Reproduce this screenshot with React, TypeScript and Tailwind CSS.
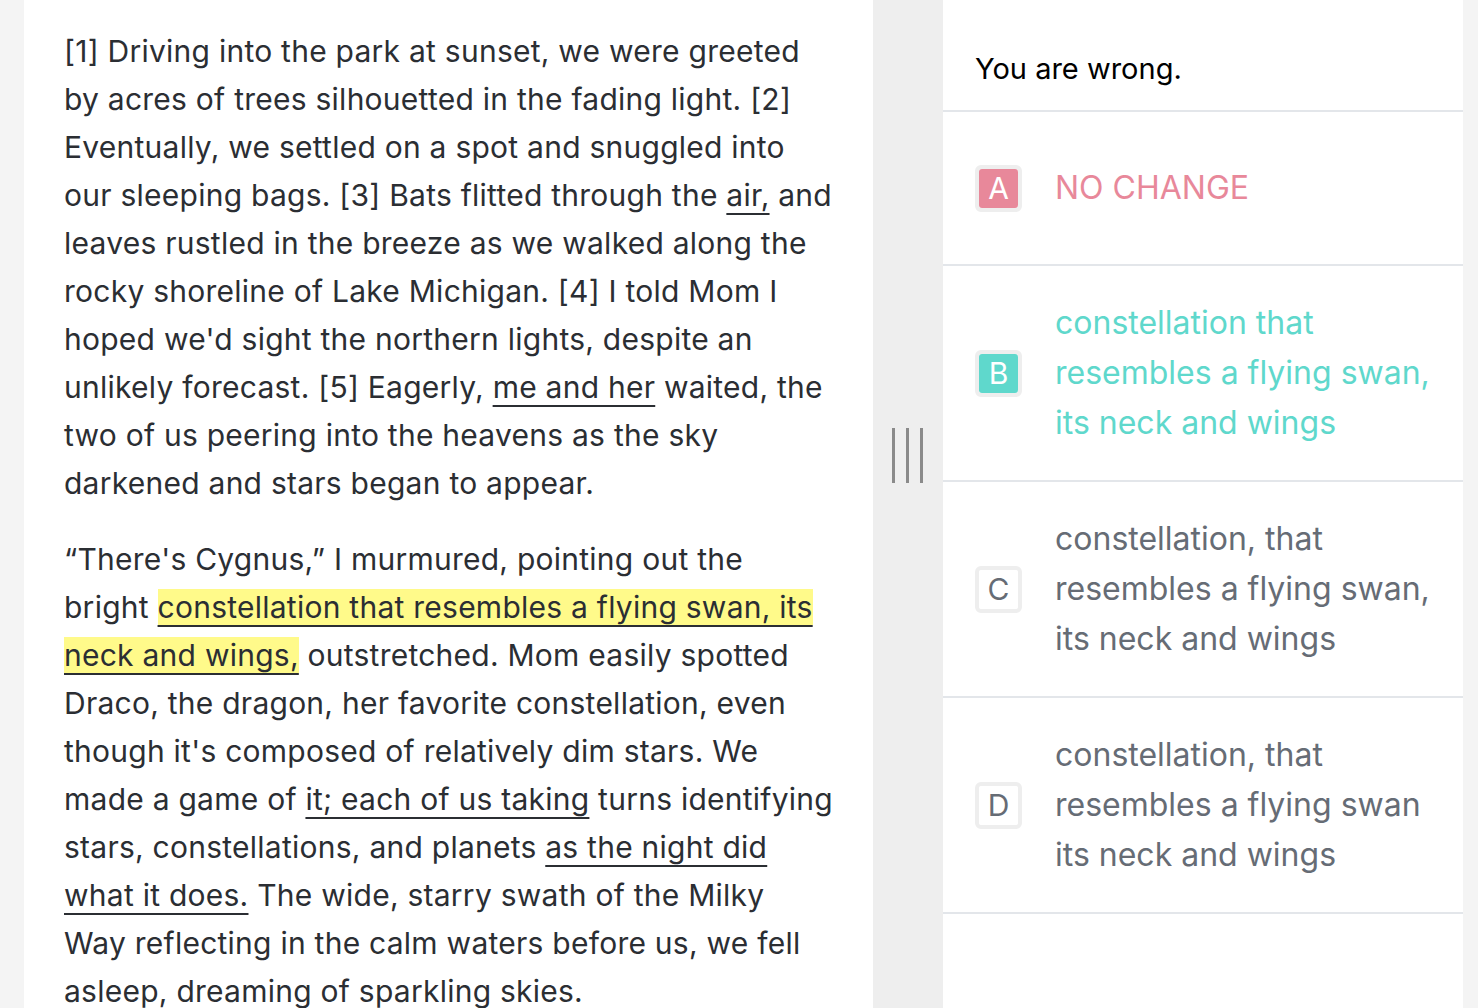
import React from "react";

const U = ({ children }: { children: React.ReactNode }) => (
  <span className="underline decoration-2 underline-offset-[7px] decoration-[#2b2e33]">{children}</span>
);

const options = [
  { letter: "A", text: "NO CHANGE", tone: "pink" },
  { letter: "B", text: "constellation that resembles a flying swan, its neck and wings", tone: "teal" },
  { letter: "C", text: "constellation, that resembles a flying swan, its neck and wings", tone: "gray" },
  { letter: "D", text: "constellation, that resembles a flying swan its neck and wings", tone: "gray" },
];

const App = () => {
  return (
    <div className="flex h-[1008px] overflow-hidden bg-[#f4f4f4] font-['Inter',sans-serif]">
      <div className="ml-6 w-[849px] shrink-0 bg-white px-10 pt-[27px] text-[30px] leading-[48px] tracking-[0.25px] text-[#2b2e33]">
        <p className="mb-7">
          [1] Driving into the park at sunset, we were greeted by acres of trees silhouetted in the fading light. [2]
          Eventually, we settled on a spot and snuggled into our sleeping bags. [3] Bats flitted through the <U>air,</U>{" "}
          and leaves rustled in the breeze as we walked along the rocky shoreline of Lake Michigan. [4] I told Mom I
          hoped we'd sight the northern lights, despite an unlikely forecast. [5] Eagerly, <U>me and her</U> waited, the
          two of us peering into the heavens as the sky darkened and stars began to appear.
        </p>
        <p>
          “There's Cygnus,” I murmured, pointing out the bright{" "}
          <span className="bg-[#fffa8a] underline decoration-2 underline-offset-[7px] decoration-[#2b2e33]">
            constellation that resembles a flying swan, its neck and wings,
          </span>{" "}
          outstretched. Mom easily spotted Draco, the dragon, her favorite constellation, even though it's composed of
          relatively dim stars. We made a game of <U>it; each of us taking</U> turns identifying stars, constellations,
          and planets <U>as the night did what it does.</U> The wide, starry swath of the Milky Way reflecting in the
          calm waters before us, we fell asleep, dreaming of sparkling skies.
        </p>
      </div>

      <div className="flex w-[70px] shrink-0 items-center justify-center gap-[11px] bg-[#eeeeee] pb-[98px] pr-[2px]">
        <div className="h-[55px] w-[3px] bg-[#8a8a8a]" />
        <div className="h-[55px] w-[3px] bg-[#8a8a8a]" />
        <div className="h-[55px] w-[3px] bg-[#8a8a8a]" />
      </div>

      <div className="w-[520px] shrink-0 bg-white">
        <div className="border-b-2 border-[#e3e6ea] px-8 pt-[51px] pb-[23px] text-[29px] leading-[36px] text-black">
          You are wrong.
        </div>
        {options.map((o) => (
          <div key={o.letter} className="flex items-center border-b-2 border-[#e3e6ea] px-8 py-8">
            <div className="flex h-[47px] w-[47px] shrink-0 items-center justify-center rounded-md border-4 border-[#eeeeee]">
              <div
                className={
                  o.tone === "pink"
                    ? "flex h-full w-full items-center justify-center rounded-[3px] bg-[#e8889a] text-[30px] text-white"
                    : o.tone === "teal"
                    ? "flex h-full w-full items-center justify-center rounded-[3px] bg-[#5fd8cc] text-[30px] text-white"
                    : "flex h-full w-full items-center justify-center rounded-[3px] bg-white text-[30px] text-[#666c75]"
                }
              >
                {o.letter}
              </div>
            </div>
            <div
              className={
                o.tone === "pink"
                  ? "ml-[33px] flex min-h-[88px] items-center text-[32px] leading-[50px] text-[#e8889a]"
                  : o.tone === "teal"
                  ? "ml-[33px] text-[32px] leading-[50px] text-[#5fd8cc]"
                  : "ml-[33px] text-[32px] leading-[50px] text-[#666c75]"
              }
            >
              {o.text}
            </div>
          </div>
        ))}
      </div>
    </div>
  );
};

export default App;
